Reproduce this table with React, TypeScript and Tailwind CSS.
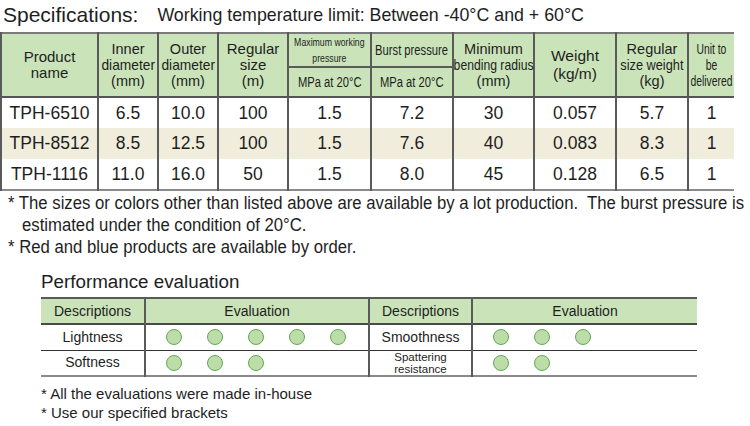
import React from "react";

const specRows = [
  ["TPH-6510", "6.5", "10.0", "100", "1.5", "7.2", "30", "0.057", "5.7", "1"],
  ["TPH-8512", "8.5", "12.5", "100", "1.5", "7.6", "40", "0.083", "8.3", "1"],
  ["TPH-1116", "11.0", "16.0", "50", "1.5", "8.0", "45", "0.128", "6.5", "1"],
];

const colWidths = [97, 60, 60, 70, 83, 82, 81, 82, 72, 46];

// condensed text, centred even when wider than its cell
const Narrow = ({ children, scale = "scale-x-[0.8]" }: { children: React.ReactNode; scale?: string }) => (
  <span className="flex justify-center">
    <span className={`inline-block whitespace-nowrap origin-center ${scale}`}>{children}</span>
  </span>
);

const Dots = ({ count }: { count: number }) => (
  <div className="flex items-center gap-[25px] pl-[20px]">
    {Array.from({ length: count }).map((_, i) => (
      <span
        key={i}
        className="block h-4 w-4 rounded-full border border-[#62a956] bg-[#bcdca8]"
      />
    ))}
  </div>
);

const th = "border-l-2 border-[#5a5a5a] text-center align-middle font-normal leading-[16px] p-0";
const td = "border-l-2 border-[#5a5a5a] text-center align-middle p-0 text-[17.5px]";

const App = () => {
  return (
    <div className="h-[426px] w-[750px] overflow-hidden bg-white text-[#1e1e1e] font-['Liberation_Sans',Arial,sans-serif]">
      <div className="flex h-[32px] items-center gap-[19px] pl-[3px] pb-[3px]">
        <span className="text-[21px]">Specifications:</span>
        <span className="text-[17.8px] pt-[2px]">
          Working temperature limit: Between -40°C and + 60°C
        </span>
      </div>

      <table className="w-[733px] table-fixed border-collapse">
        <colgroup>
          {colWidths.map((w, i) => (
            <col key={i} style={{ width: w }} />
          ))}
        </colgroup>
        <thead className="bg-[#cae3b9]">
          <tr className="h-[30px] border-t-2 border-[#7a7a7a]">
            <th rowSpan={2} className={`${th} border-l-0 text-[15px]`}>
              Product
              <br />
              name
            </th>
            <th rowSpan={2} className={`${th} text-[14.5px]`}>
              Inner
              <Narrow scale="scale-x-[0.95]">diameter</Narrow>
              (mm)
            </th>
            <th rowSpan={2} className={`${th} text-[14.5px]`}>
              Outer
              <Narrow scale="scale-x-[0.95]">diameter</Narrow>
              (mm)
            </th>
            <th rowSpan={2} className={`${th} text-[15px]`}>
              Regular
              <br />
              size
              <br />
              (m)
            </th>
            <th className={`${th} text-[11.5px] leading-[11px]`}>
              <Narrow scale="scale-x-[0.76]">
                <span className="block text-center">
                  Maximum working
                  <br />
                  pressure
                </span>
              </Narrow>
            </th>
            <th className={`${th} text-[14px]`}>
              <Narrow>Burst pressure</Narrow>
            </th>
            <th rowSpan={2} className={`${th} text-[14.5px]`}>
              Minimum
              <Narrow scale="scale-x-[0.84]">bending radius</Narrow>
              (mm)
            </th>
            <th rowSpan={2} className={`${th} text-[15.5px] leading-[18px]`}>
              Weight
              <br />
              (kg/m)
            </th>
            <th rowSpan={2} className={`${th} text-[14.5px]`}>
              Regular
              <Narrow scale="scale-x-[0.88]">size weight</Narrow>
              (kg)
            </th>
            <th rowSpan={2} className={`${th} text-[14px] leading-[15px]`}>
              <Narrow scale="scale-x-[0.74]">
                <span className="block text-center">
                  Unit to
                  <br />
                  be
                  <br />
                  delivered
                </span>
              </Narrow>
            </th>
          </tr>
          <tr className="h-[30px]">
            <th className={`${th} border-t-2 text-[14px]`}>
              <Narrow>MPa at 20°C</Narrow>
            </th>
            <th className={`${th} border-t-2 text-[14px]`}>
              <Narrow>MPa at 20°C</Narrow>
            </th>
          </tr>
        </thead>
        <tbody className="border-t-2 border-b-2 border-t-[#555] border-b-[#8a8a8a]">
          {specRows.map((row, r) => (
            <tr key={r} className={`h-[31px] ${r === 1 ? "bg-[#f1eddc]" : "bg-white"}`}>
              {row.map((cell, c) => (
                <td key={c} className={`${td} ${c === 0 ? "border-l-0" : ""}`}>
                  {cell}
                </td>
              ))}
            </tr>
          ))}
        </tbody>
      </table>

      <div className="mt-[1px] pl-[8px] text-[17.5px] leading-[22px]">
        <div>
          <span className="inline-block whitespace-nowrap origin-left scale-x-[0.955]">
            * The sizes or colors other than listed above are available by a lot production.&nbsp; The burst pressure is
          </span>
        </div>
        <div className="pl-[14px]">
          <span className="inline-block whitespace-nowrap origin-left scale-x-[0.955]">
            estimated under the condition of 20°C.
          </span>
        </div>
        <div>
          <span className="inline-block whitespace-nowrap origin-left scale-x-[0.955]">
            * Red and blue products are available by order.
          </span>
        </div>
      </div>

      <div className="pl-[41px]">
        <div className="mt-[12px] text-[18.8px] leading-[24px]">Performance evaluation</div>

        <table className="mt-[3px] w-[656px] table-fixed border-collapse text-[14px]">
          <colgroup>
            <col style={{ width: 104 }} />
            <col style={{ width: 224 }} />
            <col style={{ width: 103 }} />
            <col style={{ width: 225 }} />
          </colgroup>
          <thead className="bg-[#cae3b9]">
            <tr className="h-[26px] border-t-2 border-b-2 border-t-[#5a5a5a] border-b-[#4a4a4a]">
              <th className="p-0 text-center font-normal">Descriptions</th>
              <th className="border-l-2 border-[#5a5a5a] p-0 text-center font-normal">Evaluation</th>
              <th className="border-l-2 border-[#5a5a5a] p-0 text-center font-normal">Descriptions</th>
              <th className="border-l-2 border-[#5a5a5a] p-0 text-center font-normal">Evaluation</th>
            </tr>
          </thead>
          <tbody className="border-b-2 border-[#8a8a8a]">
            <tr className="h-[26px] border-b border-[#333]">
              <td className="p-0 text-center">Lightness</td>
              <td className="border-l-2 border-[#5a5a5a] p-0">
                <Dots count={5} />
              </td>
              <td className="border-l-2 border-[#5a5a5a] p-0 text-center">Smoothness</td>
              <td className="border-l-2 border-[#5a5a5a] p-0">
                <Dots count={3} />
              </td>
            </tr>
            <tr className="h-[26px]">
              <td className="p-0 text-center">Softness</td>
              <td className="border-l-2 border-[#5a5a5a] p-0">
                <Dots count={3} />
              </td>
              <td className="border-l-2 border-[#5a5a5a] p-0 text-center text-[11.5px] leading-[12px]">
                Spattering
                <br />
                resistance
              </td>
              <td className="border-l-2 border-[#5a5a5a] p-0">
                <Dots count={2} />
              </td>
            </tr>
          </tbody>
        </table>

        <div className="mt-[7px] text-[15px] leading-[19px]">
          <div>* All the evaluations were made in-house</div>
          <div>* Use our specified brackets</div>
        </div>
      </div>
    </div>
  );
};

export default App;
